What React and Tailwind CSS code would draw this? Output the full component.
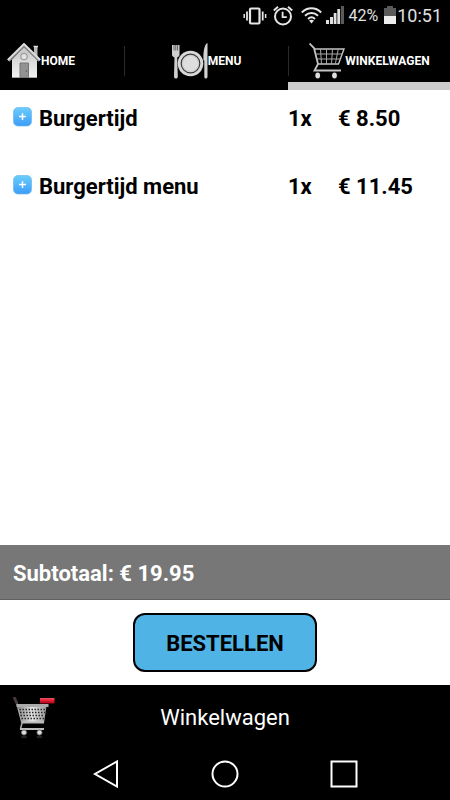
import React from 'react';

const items = [
  { name: 'Burgertijd', count: '1x', price: '€ 8.50' },
  { name: 'Burgertijd menu', count: '1x', price: '€ 11.45' },
];

function VibrateIcon() {
  return (
    <svg className="h-5 w-6 shrink-0" viewBox="0 0 24 20" fill="none" stroke="#e6e6e6" aria-hidden="true">
      <rect x="7" y="2.5" width="9.5" height="15" rx="1" strokeWidth="2.2" />
      <path d="M4 5.5v9M19.7 5.5v9" strokeWidth="1.8" />
      <path d="M1.2 8v4M22.6 8v4" strokeWidth="1.5" />
    </svg>
  );
}

function AlarmIcon() {
  return (
    <svg className="h-5 w-5 shrink-0" viewBox="0 0 20 20" fill="none" stroke="#e6e6e6" aria-hidden="true">
      <circle cx="10" cy="10.5" r="8" strokeWidth="2" />
      <path d="M9.6 5.8v5.4h4.2" strokeWidth="1.8" />
      <path d="M.8 4.4 5 .8M15 .8l4.2 3.6" strokeWidth="2" />
    </svg>
  );
}

function WifiIcon() {
  return (
    <svg className="h-5 w-[21px] shrink-0" viewBox="0 0 21 20" fill="none" stroke="#e6e6e6" strokeWidth="2" aria-hidden="true">
      <path d="M.8 6.5C6.5.9 14.500.9 20.200 6.500" />
      <path d="M4 9.800c3.800-3.700 9.200-3.700 13 0" />
      <path d="M7 12.900c2.100-1.900 4.900-1.900 7 0" />
      <path d="m8 14.600 2.500 2.900 2.500-2.900c-1.400-1.300-3.600-1.300-5 0z" fill="#e6e6e6" stroke="none" />
    </svg>
  );
}

function SignalIcon() {
  return (
    <svg className="h-5 w-[18px] shrink-0" viewBox="0 0 18 20" fill="#e0e0e0" aria-hidden="true">
      <rect x="0" y="14" width="3" height="4" />
      <rect x="4" y="11" width="3" height="7" />
      <rect x="7.7" y="7" width="2.8" height="11" />
      <rect x="11.3" y="3" width="2.8" height="15" />
      <rect x="15" y="0" width="3" height="18" fill="#5a5a5a" />
    </svg>
  );
}

function BatteryIcon() {
  return (
    <svg className="h-5 w-3 shrink-0" viewBox="0 0 12 20" aria-hidden="true">
      <path d="M0 2h3V0h6v2h3v8H0z" fill="#5a5a5a" />
      <path d="M0 10h12v8H0z" fill="#ececec" />
    </svg>
  );
}

function HouseIcon() {
  return (
    <svg className="h-9 w-[34px] shrink-0" viewBox="0 0 34 36" aria-hidden="true">
      <defs>
        <linearGradient id="wall" x1="0" x2="0" y1="0" y2="1">
          <stop offset="0" stopColor="#c4c4c4" />
          <stop offset="1" stopColor="#f2f2f2" />
        </linearGradient>
      </defs>
      <path d="M27 4h3.500v13H27z" fill="#b9b9b9" />
      <path d="M26.500 3.500h4.500" stroke="#ddd" strokeWidth="1.500" />
      <path d="M17 4 5 16.500V34.500h25v-18z" fill="url(#wall)" />
      <path d="M5 34.500h25" stroke="#a5a5a5" />
      <path d="M1.500 17.800 17 2.500l15.500 15.300" fill="none" stroke="#8a8a8a" strokeWidth="3" />
      <path d="M.8 17 17 1l16.200 16" fill="none" stroke="#dcdcdc" strokeWidth="2" />
      <circle cx="17" cy="13.500" r="3.200" fill="#e2e2e2" stroke="#9c9c9c" strokeWidth="1.200" />
      <path d="M13 20h8.500v14.500H13z" fill="#929292" stroke="#747474" />
      <circle cx="19.500" cy="28" r=".7" fill="#555" />
    </svg>
  );
}

function PlateIcon() {
  return (
    <svg className="h-9 w-9 shrink-0" viewBox="0 0 36 36" aria-hidden="true">
      <path d="M0 2v9.500c0 2 1.500 2.500 2.500 3L2 33.500c0 2.800 3.800 2.800 3.800 0l-.600-19c1-.500 2.300-1 2.300-3V2z" fill="#cfcfcf" />
      <path d="M2 2v5.500M3.800 2v5.500M5.600 2v5.500" stroke="#333" strokeWidth=".7" />
      <path d="M35.500 0c-3 1-4.500 9-4 17.500h.800v16c0 2.800 3.200 2.800 3.200 0z" fill="#d2d2d2" />
      <circle cx="18.500" cy="20.500" r="12.800" fill="#d8d8d8" />
      <circle cx="18.500" cy="20.500" r="9.300" fill="#dcdcdc" stroke="#3c3c3c" strokeWidth="1.200" />
      <circle cx="18.500" cy="20.500" r="7.900" fill="#dedede" stroke="#bbb" strokeWidth=".5" />
    </svg>
  );
}

function CartIcon() {
  return (
    <svg className="h-9 w-9 shrink-0" viewBox="0 0 36 36" fill="none" stroke="#c4c4c4" aria-hidden="true">
      <path d="m.500.500 4.500 4.500L9 21" strokeWidth="1.800" />
      <path d="M5.500 6H35L29.500 21H9" strokeWidth="1.400" />
      <path d="M6.500 11h26.500M7.700 16h23.500" stroke="#a8a8a8" />
      <path d="m11.500 6 1 15M17.500 6v15M23.500 6l-1 15M29.300 6l-3 15" stroke="#a8a8a8" />
      <path d="m9 21-3.500 6.500H32" strokeWidth="1.800" />
      <ellipse cx="8.700" cy="32.500" rx="2.400" ry="3" fill="#dedede" stroke="none" />
      <ellipse cx="25.500" cy="32.500" rx="2.400" ry="3" fill="#dedede" stroke="none" />
    </svg>
  );
}

function RemoveCartIcon() {
  return (
    <svg className="h-[42px] w-[43px] shrink-0" viewBox="0 0 43 42" fill="none" aria-hidden="true">
      <defs>
        <linearGradient id="badge" x1="0" x2="0" y1="0" y2="1">
          <stop offset="0" stopColor="#f25462" />
          <stop offset=".5" stopColor="#df1930" />
          <stop offset="1" stopColor="#a50716" />
        </linearGradient>
        <linearGradient id="basket" x1="0" x2="1">
          <stop offset="0" stopColor="#888" />
          <stop offset=".5" stopColor="#e4e4e4" />
          <stop offset="1" stopColor="#999" />
        </linearGradient>
      </defs>
      <path d="m3 3 6 23-1.500 6" stroke="#aaa" strokeWidth="1.500" />
      <path d="m1.500 1 2 4.500" stroke="#443838" strokeWidth="3" strokeLinecap="round" />
      <path d="M5 9h28.500L31 26H9z" fill="url(#basket)" />
      <path d="M6.500 12.500h26M7 15.500h25M7.500 18.500h24M8.500 21.500h23" stroke="#292929" strokeWidth="1.500" strokeDasharray="1.500 1.500" />
      <path d="M3.500 8.500h32" stroke="#aaa" strokeWidth="3" />
      <path d="M9 25.500h22M7 32h24" stroke="#bbb" strokeWidth="1.800" />
      <ellipse cx="11" cy="40" rx="3" ry="1.200" fill="#242424" />
      <ellipse cx="26.500" cy="40" rx="3" ry="1.200" fill="#242424" />
      <circle cx="11" cy="35.500" r="2.500" fill="#ddd" stroke="#777" />
      <circle cx="26.500" cy="35.500" r="2.500" fill="#ddd" stroke="#777" />
      <path d="M27 1h14.500v5.500H27z" fill="url(#badge)" />
    </svg>
  );
}

function PlusIcon() {
  return (
    <svg className="h-5 w-5" viewBox="0 0 20 20" aria-hidden="true">
      <defs>
        <linearGradient id="plus" x1="0" x2="0" y1="0" y2="1">
          <stop offset="0" stopColor="#6bcdfb" />
          <stop offset="1" stopColor="#3c9cfa" />
        </linearGradient>
      </defs>
      <rect x=".5" y=".5" width="18" height="18.500" rx="4.500" fill="url(#plus)" stroke="#6fb8ea" strokeOpacity=".7" />
      <path d="M9.500 6.200v6.800M6.100 9.600h6.800" stroke="#fff" strokeWidth="1.500" />
    </svg>
  );
}

function Tab({ icon, label, active, divided, start }) {
  return (
    <button
      type="button"
      aria-current={active ? 'page' : undefined}
      className="relative flex h-full items-center text-xs font-bold"
    >
      {divided && <span className="h-[30px] w-px shrink-0 bg-[#2b2b2b]" />}
      <span className={start ? 'flex items-center pl-[7px]' : 'flex flex-1 items-center justify-center'}>
        {icon}
        {label}
      </span>
      {active && <span className="absolute inset-x-0 bottom-0 h-2 bg-[#cccccc]" />}
    </button>
  );
}

export default function App() {
  return (
    <div className="flex min-h-screen flex-col bg-white font-['Roboto',sans-serif] text-black">
      <header className="bg-black text-white">
        <div className="flex h-8 items-center justify-end pr-2 text-[#e0e0e0]">
          <VibrateIcon />
          <span className="ml-1.5 flex"><AlarmIcon /></span>
          <span className="ml-2 flex"><WifiIcon /></span>
          <span className="ml-1 flex"><SignalIcon /></span>
          <span className="ml-1 text-base">42%</span>
          <span className="ml-1.5 flex"><BatteryIcon /></span>
          <time className="ml-px text-lg">10:51</time>
        </div>
        <nav className="grid h-[58px] grid-cols-[124fr_164fr_162fr]">
          <Tab icon={<HouseIcon />} label="HOME" start />
          <Tab icon={<PlateIcon />} label="MENU" divided />
          <Tab icon={<CartIcon />} label="WINKELWAGEN" divided active />
        </nav>
      </header>

      <main className="flex flex-1 flex-col">
        <ul className="flex-1 text-[22px] font-bold">
          {items.map((item) => (
            <li key={item.name} className="grid h-[68px] grid-cols-[26px_1fr_50px_112px] items-start pt-[13px] pl-[13px]">
              <button type="button" aria-label={`${item.name} toevoegen`} className="mt-1">
                <PlusIcon />
              </button>
              <span className="leading-8">{item.name}</span>
              <span className="leading-8">{item.count}</span>
              <span className="leading-8">{item.price}</span>
            </li>
          ))}
        </ul>
        <p className="flex h-[55px] items-center border-b border-[#606060] bg-[#777777] px-[13px] pt-0.5 text-[22px] font-bold text-white">
          Subtotaal: € 19.95
        </p>
        <div className="flex justify-center py-[13px]">
          <button
            type="button"
            className="h-[59px] rounded-xl border-2 border-black bg-[#50b3e6] px-[31px] pt-0.5 text-[22px] font-bold"
          >
            BESTELLEN
          </button>
        </div>
      </main>

      <footer className="bg-black text-white">
        <div className="grid h-[65px] grid-cols-[1fr_auto_1fr] items-center px-[13px]">
          <button type="button" aria-label="Winkelwagen legen" className="justify-self-start">
            <RemoveCartIcon />
          </button>
          <h1 className="text-[22px]">Winkelwagen</h1>
        </div>
        <div className="flex h-[50px] items-center justify-between px-[92px] pb-0.5">
          <button type="button" aria-label="Terug">
            <svg className="h-7 w-7" viewBox="0 0 28 28" fill="none" stroke="#fff" strokeWidth="2">
              <path d="M25 1.500v25L3 14z" />
            </svg>
          </button>
          <button type="button" aria-label="Start">
            <svg className="h-7 w-7" viewBox="0 0 28 28" fill="none" stroke="#fff" strokeWidth="2">
              <circle cx="14" cy="14" r="12.500" />
            </svg>
          </button>
          <button type="button" aria-label="Recente apps">
            <svg className="h-7 w-7" viewBox="0 0 28 28" fill="none" stroke="#fff" strokeWidth="2">
              <path d="M1.500 1.500h25v25h-25z" />
            </svg>
          </button>
        </div>
      </footer>
    </div>
  );
}
